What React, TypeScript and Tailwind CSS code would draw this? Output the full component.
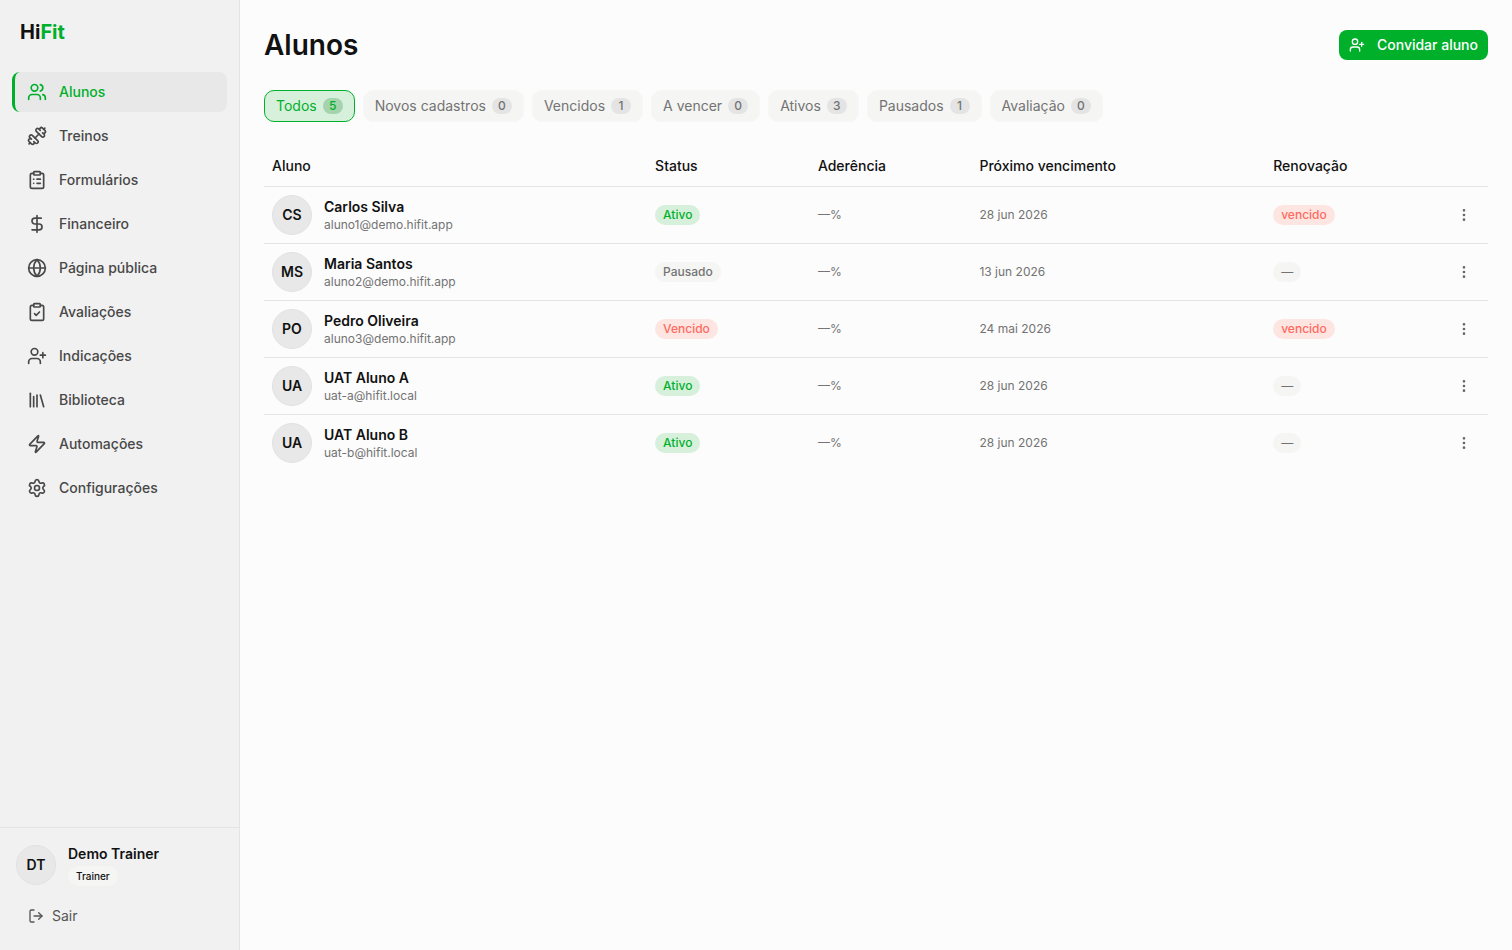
import React, { useState } from "react";
import {
  ClipboardCheck,
  ClipboardList,
  DollarSign,
  Dumbbell,
  EllipsisVertical,
  Globe,
  Library,
  LogOut,
  Settings,
  UserPlus,
  Users,
  Zap,
  type LucideIcon,
} from "lucide-react";

const NAV: { label: string; icon: LucideIcon }[] = [
  { label: "Alunos", icon: Users },
  { label: "Treinos", icon: Dumbbell },
  { label: "Formulários", icon: ClipboardList },
  { label: "Financeiro", icon: DollarSign },
  { label: "Página pública", icon: Globe },
  { label: "Avaliações", icon: ClipboardCheck },
  { label: "Indicações", icon: UserPlus },
  { label: "Biblioteca", icon: Library },
  { label: "Automações", icon: Zap },
  { label: "Configurações", icon: Settings },
];

const FILTERS = [
  { label: "Todos", count: 5 },
  { label: "Novos cadastros", count: 0 },
  { label: "Vencidos", count: 1 },
  { label: "A vencer", count: 0 },
  { label: "Ativos", count: 3 },
  { label: "Pausados", count: 1 },
  { label: "Avaliação", count: 0 },
];

type Tone = "green" | "red" | "gray";

const STUDENTS: {
  initials: string;
  name: string;
  email: string;
  status: string;
  tone: Tone;
  due: string;
  renewal: string;
}[] = [
  { initials: "CS", name: "Carlos Silva", email: "aluno1@demo.hifit.app", status: "Ativo", tone: "green", due: "28 jun 2026", renewal: "vencido" },
  { initials: "MS", name: "Maria Santos", email: "aluno2@demo.hifit.app", status: "Pausado", tone: "gray", due: "13 jun 2026", renewal: "—" },
  { initials: "PO", name: "Pedro Oliveira", email: "aluno3@demo.hifit.app", status: "Vencido", tone: "red", due: "24 mai 2026", renewal: "vencido" },
  { initials: "UA", name: "UAT Aluno A", email: "uat-a@hifit.local", status: "Ativo", tone: "green", due: "28 jun 2026", renewal: "—" },
  { initials: "UA", name: "UAT Aluno B", email: "uat-b@hifit.local", status: "Ativo", tone: "green", due: "28 jun 2026", renewal: "—" },
];

const TONES: Record<Tone, string> = {
  green: "bg-[#d7f0dc] text-[#00b02b]",
  red: "bg-[#fde5e2] text-[#ff6b5e]",
  gray: "bg-[#f5f5f4] text-[#737373]",
};

function Pill({ tone, children }: { tone: Tone; children: React.ReactNode }) {
  return (
    <span className={`inline-flex h-5 items-center rounded-full px-2 align-middle text-xs font-medium ${TONES[tone]}`}>
      {children}
    </span>
  );
}

function Avatar({ initials }: { initials: string }) {
  return (
    <span className="flex size-10 shrink-0 items-center justify-center rounded-full border border-[#e2e2e2] bg-[#e8e8e8] text-sm font-semibold text-[#111111]">
      {initials}
    </span>
  );
}

function Sidebar() {
  return (
    <aside className="sticky top-0 flex h-screen w-60 shrink-0 flex-col border-r border-[#e4e4e4] bg-[#f1f1f1]">
      <div className="flex h-16 items-center px-5 text-xl font-bold text-[#111111]">
        <span>
          Hi<span className="text-[#00b02b]">Fit</span>
        </span>
      </div>
      <nav className="flex flex-1 flex-col gap-1 px-3 py-2">
        {NAV.map(({ label, icon: Icon }, i) => (
          <a
            key={label}
            href="#"
            aria-current={i === 0 ? "page" : undefined}
            className={`flex h-10 items-center gap-3 rounded-lg border-l-3 px-3 text-sm font-medium ${
              i === 0 ? "border-[#00b02b] bg-[#e8e8e8] text-[#00b02b]" : "border-transparent text-[#484848]"
            }`}
          >
            <Icon className="size-5" />
            {label}
          </a>
        ))}
      </nav>
      <div className="border-t border-[#e4e4e4] p-4">
        <div className="flex items-center gap-3">
          <Avatar initials="DT" />
          <div className="flex flex-col items-start gap-0.5">
            <span className="text-sm font-semibold text-[#111111]">Demo Trainer</span>
            <span className="flex h-5 items-center rounded-full bg-[#f5f5f4] px-2 text-[10px] font-medium text-[#111111]">
              Trainer
            </span>
          </div>
        </div>
        <button type="button" className="mt-3 flex h-9 w-full items-center gap-2 px-3 text-sm text-[#555555]">
          <LogOut className="size-4" />
          Sair
        </button>
      </div>
    </aside>
  );
}

export default function App() {
  const [active, setActive] = useState("Todos");

  return (
    <div className="flex min-h-screen bg-[#fcfcfc] font-['Inter',sans-serif] text-[#111111]">
      <Sidebar />
      <main className="flex min-w-0 flex-1 flex-col gap-6 p-6">
        <header className="flex h-[42px] items-center justify-between">
          <h1 className="text-[28px] font-semibold">Alunos</h1>
          <button
            type="button"
            className="flex h-[30px] items-center gap-3 rounded-lg bg-[#00b02b] px-2.5 text-sm font-medium text-white"
          >
            <UserPlus className="size-4" />
            Convidar aluno
          </button>
        </header>

        <div className="flex flex-wrap gap-2">
          {FILTERS.map(({ label, count }) => {
            const on = label === active;
            return (
              <button
                key={label}
                type="button"
                aria-pressed={on}
                onClick={() => setActive(label)}
                className={`flex h-8 items-center gap-1.5 rounded-[10px] border px-[11px] text-sm ${
                  on ? "border-[#00b02b] bg-[#d7f0dc] text-[#00b02b]" : "border-[#f7f7f6] bg-[#f5f5f4] text-[#737373]"
                }`}
              >
                {label}
                <span
                  className={`flex h-4 w-5 items-center justify-center rounded-full text-xs font-medium ${
                    on ? "bg-[#a5d3ad]" : "bg-[#e4e4e4]"
                  }`}
                >
                  {count}
                </span>
              </button>
            );
          })}
        </div>

        <table className="w-full table-fixed text-left text-sm">
          <colgroup>
            <col className="w-[31.3%]" />
            <col className="w-[13.3%]" />
            <col className="w-[13.2%]" />
            <col className="w-[24%]" />
            <col />
            <col className="w-12" />
          </colgroup>
          <thead>
            <tr className="h-10 border-b border-[#e4e4e4]">
              <th className="px-2 font-medium">Aluno</th>
              <th className="px-2 font-medium">Status</th>
              <th className="px-2 font-medium">Aderência</th>
              <th className="px-2 font-medium">Próximo vencimento</th>
              <th className="px-2 font-medium">Renovação</th>
              <th aria-label="Ações" />
            </tr>
          </thead>
          <tbody>
            {STUDENTS.map((s) => (
              <tr key={s.email} className="border-b border-[#e4e4e4] last:border-0">
                <td className="p-2">
                  <div className="flex items-center gap-3">
                    <Avatar initials={s.initials} />
                    <div className="min-w-0">
                      <div className="truncate text-sm font-semibold">{s.name}</div>
                      <div className="truncate text-xs text-[#737373]">{s.email}</div>
                    </div>
                  </div>
                </td>
                <td className="p-2">
                  <Pill tone={s.tone}>{s.status}</Pill>
                </td>
                <td className="p-2 text-xs text-[#737373]">––%</td>
                <td className="p-2 text-xs text-[#737373]">{s.due}</td>
                <td className="p-2">
                  <Pill tone={s.renewal === "vencido" ? "red" : "gray"}>{s.renewal}</Pill>
                </td>
                <td className="p-2">
                  <button
                    type="button"
                    aria-label={`Ações de ${s.name}`}
                    className="flex size-8 items-center justify-center text-[#666666]"
                  >
                    <EllipsisVertical className="size-4" />
                  </button>
                </td>
              </tr>
            ))}
          </tbody>
        </table>
      </main>
    </div>
  );
}
